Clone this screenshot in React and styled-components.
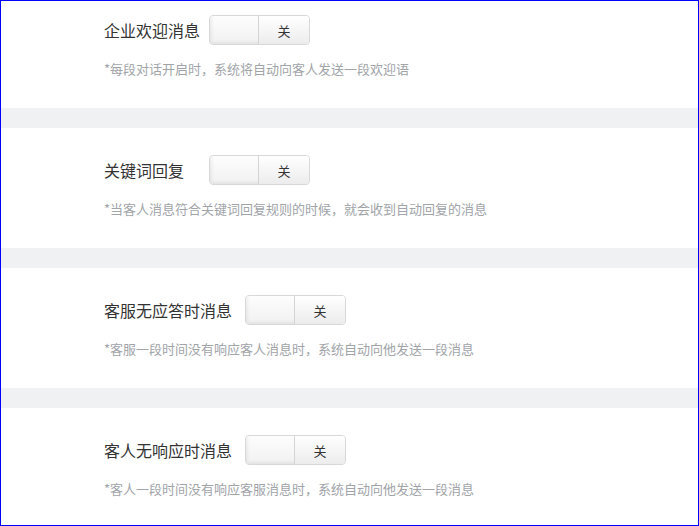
import React from "react";
import styled, { createGlobalStyle } from "styled-components";

const GlobalStyle = createGlobalStyle`
  body {
    margin: 0;
    background: #fff;
    font-family: "Noto Sans CJK SC", "Liberation Sans", sans-serif;
  }
`;

const Frame = styled.div`
  width: 699px;
  height: 526px;
  box-sizing: border-box;
  border: 1px solid #0000ff;
  overflow: hidden;
  background: #fff;
`;

const Section = styled.div`
  padding: ${(p) => (p.first ? "14px" : "27px")} 0 29px 103px;
`;

const Band = styled.div`
  height: 20px;
  background: #f0f1f3;
`;

const Row = styled.div`
  display: flex;
  align-items: center;
  height: 30px;
`;

const Label = styled.span`
  width: ${(p) => p.width}px;
  font-size: 16px;
  color: #333;
  line-height: 30px;
  white-space: nowrap;
`;

const Switch = styled.div`
  display: flex;
  width: 101px;
  height: 30px;
  box-sizing: border-box;
  border: 1px solid #d8d8d8;
  border-radius: 4px;
  overflow: hidden;
  cursor: pointer;
`;

const Knob = styled.div`
  width: 48px;
  border-right: 1px solid #d4d4d4;
  background: linear-gradient(to bottom, #fdfdfd, #f1f1f1);
  box-shadow: inset 2px -2px 3px rgba(0, 0, 0, 0.06);
`;

const State = styled.div`
  flex: 1;
  display: flex;
  align-items: center;
  justify-content: center;
  font-size: 13px;
  color: #333;
  background: linear-gradient(to bottom, #ffffff, #ececec);
`;

const Hint = styled.div`
  margin-top: 14px;
  font-size: 13px;
  line-height: 20px;
  color: #a1a4a9;
  white-space: nowrap;
`;

const items = [
  { title: "企业欢迎消息", width: 105, hint: "*每段对话开启时，系统将自动向客人发送一段欢迎语" },
  { title: "关键词回复", width: 105, hint: "*当客人消息符合关键词回复规则的时候，就会收到自动回复的消息" },
  { title: "客服无应答时消息", width: 141, hint: "*客服一段时间没有响应客人消息时，系统自动向他发送一段消息" },
  { title: "客人无响应时消息", width: 141, hint: "*客人一段时间没有响应客服消息时，系统自动向他发送一段消息" },
];

const App = () => {
  return (
    <>
      <GlobalStyle />
      <Frame>
        {items.map((item, i) => (
          <React.Fragment key={item.title}>
            {i > 0 && <Band />}
            <Section first={i === 0}>
              <Row>
                <Label width={item.width}>{item.title}</Label>
                <Switch>
                  <Knob />
                  <State>关</State>
                </Switch>
              </Row>
              <Hint>{item.hint}</Hint>
            </Section>
          </React.Fragment>
        ))}
      </Frame>
    </>
  );
};

export default App;
